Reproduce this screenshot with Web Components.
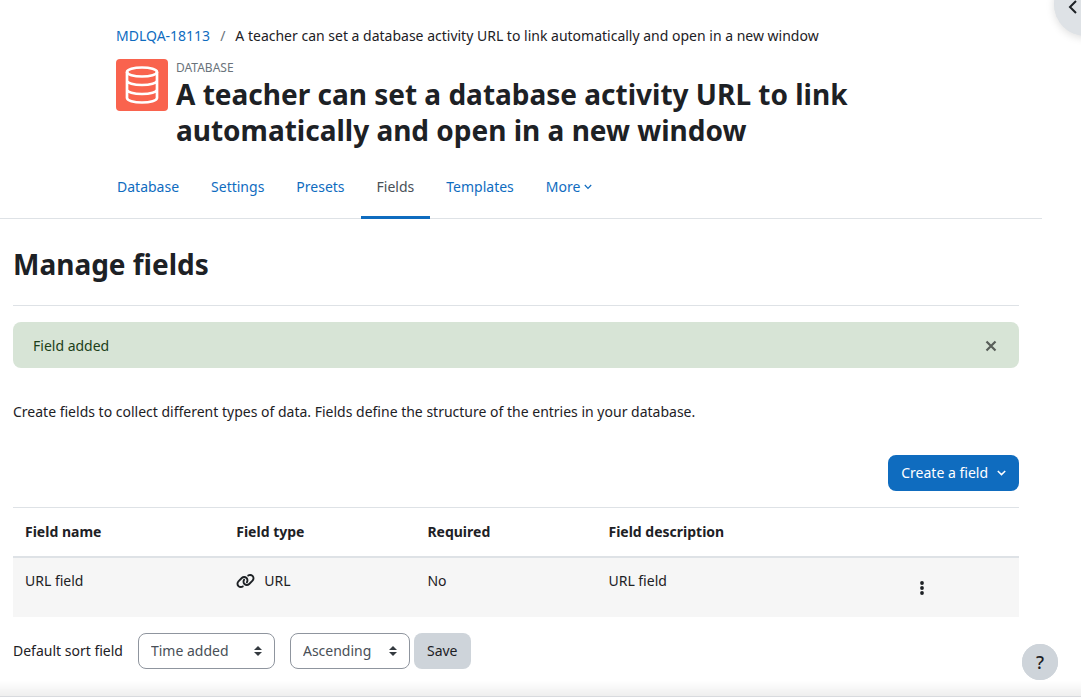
<!DOCTYPE html>
<html lang="en">
<head>
<meta charset="utf-8">
<meta name="viewport" content="width=device-width, initial-scale=1">
<title>Manage fields</title>
<style>
  body { margin: 0; background: #fff; color: #1d2125; font: 14px/22px "Noto Sans", "Open Sans", sans-serif;
    --link: #0f6cbf; --line: #dee2e6; --grey: #ced4da; }
</style>
</head>
<body>
<database-page></database-page>
<script>
const define = (name, html) => {
  const template = document.createElement('template');
  template.innerHTML = html;
  customElements.define(name, class extends HTMLElement {
    constructor() {
      super();
      this.attachShadow({ mode: 'open' }).append(template.content.cloneNode(true));
    }
  });
};

define('bread-crumb', `
  <style>
    :host { display: block; }
    nav { display: flex; gap: 10px; }
    ::slotted(a) { color: var(--link); text-decoration: none; }
    .sep { color: #6a737b; }
  </style>
  <nav aria-label="Breadcrumb"><slot name="parent"></slot><span class="sep">/</span><slot></slot></nav>`);

define('activity-title', `
  <style>
    :host { display: flex; gap: 8px; align-items: flex-start; }
    .icon { flex: none; width: 52px; height: 52px; border-radius: 4px; background: #f9634e; }
    svg { display: block; width: 52px; height: 52px; }
    .kind { font-size: 12px; line-height: 17px; color: #6a737b; text-transform: uppercase; }
    h1 { margin: 0; font-size: 28px; line-height: 36px; font-weight: 700; }
  </style>
  <div class="icon"><svg viewBox="0 0 52 52" fill="none" stroke="#fff" stroke-width="2.700" aria-hidden="true">
    <ellipse cx="26" cy="13" rx="15" ry="4.500"/>
    <path d="M11 13v26c0 2.500 6.700 4.500 15 4.500s15-2 15-4.500V13M11 21.500c0 2.500 6.700 4.500 15 4.500s15-2 15-4.500M11 30.500c0 2.500 6.700 4.500 15 4.500s15-2 15-4.500"/>
  </svg></div>
  <div><div class="kind"><slot name="kind"></slot></div><h1><slot></slot></h1></div>`);

define('nav-tab', `
  <style>
    :host { display: block; }
    a { display: flex; align-items: center; gap: 4px; height: 58px; padding: 0 16px; color: var(--link);
      text-decoration: none; border-bottom: 3px solid transparent; }
    :host([active]) a { color: #495057; border-color: var(--link); }
    svg { display: none; }
    :host([menu]) svg { display: block; }
  </style>
  <a href="#"><slot></slot><svg width="8" height="6" viewBox="0 0 8 6" fill="none" stroke="currentColor" stroke-width="1.200" aria-hidden="true"><path d="M.8 1 4 4.300 7.200 1"/></svg></a>`);

define('dismiss-alert', `
  <style>
    :host { display: flex; justify-content: space-between; align-items: center; padding: 13px 20px 11px; border-radius: 8px;
      background: #d7e4d6; color: #1c3f19; }
    button { display: grid; place-items: center; width: 16px; height: 16px; padding: 0; border: 0; background: none; color: #585e59; }
  </style>
  <span role="status"><slot></slot></span>
  <button type="button" aria-label="Dismiss this notification"><svg width="12" height="12" viewBox="0 0 12 12" fill="none" stroke="currentColor" stroke-width="2.200" aria-hidden="true"><path d="m1.500 1.500 9 9m0-9-9 9"/></svg></button>`);

define('menu-button', `
  <style>
    :host { display: block; }
    button { display: flex; align-items: center; gap: 9px; height: 36px; padding: 0 13px; border: 0; border-radius: 8px;
      background: var(--link); color: #fff; font: inherit; }
  </style>
  <button type="button" aria-haspopup="true"><slot></slot><svg width="9" height="6" viewBox="0 0 9 6" fill="none" stroke="currentColor" stroke-width="1.500" aria-hidden="true"><path d="m.8 1 3.700 3.600L8.200 1"/></svg></button>`);

define('fields-table', `
  <style>
    :host { display: block; }
    table { width: 100%; table-layout: fixed; border-collapse: collapse; text-align: left; }
    th, td { box-sizing: border-box; padding: 12px; }
    th { height: 49px; border-top: 1px solid var(--line); border-bottom: 2px solid var(--line); font-weight: 700; }
    td { height: 60px; vertical-align: top; background: #f6f6f6; }
    td:last-child { padding: 12px 12px 11px; }
    .type { display: flex; align-items: center; gap: 9px; }
    .name { width: 21%; } .kind { width: 19%; } .req { width: 18%; } .desc { width: 30%; }
    button { display: grid; place-items: center; width: 24px; height: 36px; padding: 0; border: 0; background: none; color: inherit; }
  </style>
  <table>
    <thead><tr>
      <th class="name" scope="col">Field name</th><th class="kind" scope="col">Field type</th>
      <th class="req" scope="col">Required</th><th class="desc" scope="col">Field description</th><th></th>
    </tr></thead>
    <tbody><tr>
      <td>URL field</td>
      <td><span class="type"><svg width="19" height="16" viewBox="0 0 640 512" fill="currentColor" aria-hidden="true"><path d="M579.800 267.700c56.500-56.500 56.500-148 0-204.500-50-50-128.800-56.500-186.300-15.400l-1.600 1.100c-14.400 10.300-17.700 30.300-7.400 44.600s30.300 17.700 44.600 7.400l1.600-1.100c32.100-22.900 76-19.300 103.800 8.600 31.500 31.500 31.500 82.500 0 114L422.300 334.800c-31.500 31.500-82.500 31.500-114 0-27.900-27.900-31.500-71.800-8.600-103.800l1.100-1.600c10.300-14.400 6.900-34.400-7.400-44.600s-34.400-6.900-44.600 7.400l-1.100 1.600C206.500 251.200 213 330 263 380c56.500 56.500 148 56.500 204.500 0l112.300-112.300zM60.200 244.300c-56.500 56.500-56.500 148 0 204.500 50 50 128.800 56.500 186.300 15.400l1.600-1.100c14.400-10.300 17.700-30.300 7.400-44.600s-30.300-17.700-44.600-7.400l-1.600 1.100c-32.100 22.900-76 19.300-103.800-8.600C74 372 74 321 105.500 289.500l112.200-112.300c31.500-31.500 82.500-31.500 114 0 27.900 27.900 31.500 71.800 8.600 103.900l-1.100 1.600c-10.300 14.400-6.900 34.400 7.400 44.600s34.400 6.900 44.600-7.400l1.100-1.600C433.500 260.800 427 182 377 132c-56.500-56.500-148-56.500-204.500 0L60.200 244.300z"/></svg>URL</span></td>
      <td>No</td>
      <td>URL field</td>
      <td><button type="button" aria-label="Actions"><svg width="4" height="14" viewBox="0 0 4 14" fill="currentColor" aria-hidden="true"><circle cx="2" cy="2" r="1.900"/><circle cx="2" cy="7" r="1.900"/><circle cx="2" cy="12" r="1.900"/></svg></button></td>
    </tr></tbody>
  </table>`);

define('sort-form', `
  <style>
    :host { display: block; }
    form { display: flex; align-items: center; }
    label { margin-right: 15px; }
    select { appearance: none; height: 36px; margin: 0 15px 0 0; padding: 0 36px 0 12px; border: 1px solid #8f959e; border-radius: 8px; color: #495057;
      font: inherit; background: #fff url("data:image/svg+xml,%3Csvg xmlns='http://www.w3.org/2000/svg' viewBox='0 0 8 10'%3E%3Cpath fill='%23343a40' d='M4 0 0 4h8zM0 6l4 4 4-4z'/%3E%3C/svg%3E") no-repeat right 12px center / 8px 10px; }
    .by { width: 137px; }
    .order { width: 120px; margin-right: 4px; }
    button { height: 36px; padding: 0 13px; border: 0; border-radius: 8px; background: var(--grey); color: inherit; font: inherit; }
  </style>
  <form>
    <label for="by">Default sort field</label>
    <select id="by" class="by"><option>Time added</option></select>
    <select class="order" aria-label="Sort order"><option>Ascending</option></select>
    <button type="button">Save</button>
  </form>`);

define('round-button', `
  <style>
    :host { display: block; }
    button { display: grid; place-items: center; width: 100%; height: 100%; padding: 0; border: 0; border-radius: 50%;
      background: inherit; color: inherit; font: inherit; }
  </style>
  <button type="button"><slot></slot></button>`);

define('database-page', `
  <style>
    :host { display: block; }
    main { margin-right: 39px; }
    header { padding: 25px 23px 0 13px; border-bottom: 1px solid var(--line); }
    .narrow { max-width: 800px; margin: 0 auto; }
    activity-title { margin-top: 12px; }
    .tabs { display: flex; margin: 10px 0 -1px -15px; }
    .body { padding: 27px 23px 24px 13px; }
    h2 { margin: 0; font-size: 28px; line-height: 36px; font-weight: 700; }
    hr { margin: 23px 0 16px; border: 0; border-top: 1px solid var(--line); }
    p { margin: 33px 0 32px; }
    .actions { display: flex; justify-content: flex-end; margin-bottom: 16px; }
    sort-form { margin-top: 16px; }
    .drawer { position: fixed; top: -28px; right: -37px; width: 64px; height: 64px; border-radius: 50%; background: #dee2e6; box-shadow: 0 2px 8px #0002; }
    .help { position: fixed; right: 23px; bottom: 17px; width: 36px; height: 36px; border-radius: 50%; background: var(--grey);
      font-size: 18px; font-weight: 500; z-index: 1; }
    .edge { position: fixed; left: 0; right: 0; bottom: 0; height: 15px; background: linear-gradient(#fff0, #0001); border-bottom: 1px solid #d8dade; pointer-events: none; }
    .drawer svg { margin: 6px 28px 0 0; }
  </style>
  <main>
    <header><div class="narrow">
      <bread-crumb><a slot="parent" href="#">MDLQA-18113</a>A teacher can set a database activity URL to link automatically and open in a new window</bread-crumb>
      <activity-title><span slot="kind">Database</span>A teacher can set a database activity URL to link automatically and open in a new window</activity-title>
      <nav class="tabs" aria-label="Activity">
        <nav-tab>Database</nav-tab><nav-tab>Settings</nav-tab><nav-tab>Presets</nav-tab>
        <nav-tab active>Fields</nav-tab><nav-tab>Templates</nav-tab><nav-tab menu>More</nav-tab>
      </nav>
    </div></header>
    <div class="body">
      <h2>Manage fields</h2>
      <hr>
      <dismiss-alert>Field added</dismiss-alert>
      <p>Create fields to collect different types of data. Fields define the structure of the entries in your database.</p>
      <div class="actions"><menu-button>Create a field</menu-button></div>
      <fields-table></fields-table>
      <sort-form></sort-form>
    </div>
  </main>
  <div class="edge"></div>
  <round-button class="drawer"><svg width="9" height="14" viewBox="0 0 9 14" fill="none" stroke="currentColor" stroke-width="2" role="img" aria-label="Open drawer"><path d="M8 1 2 7l6 6"/></svg></round-button>
  <round-button class="help">?</round-button>`);
</script>
</body>
</html>
